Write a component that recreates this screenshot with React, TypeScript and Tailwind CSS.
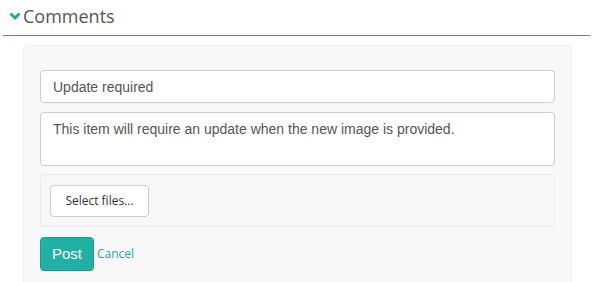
export default function App() {
  return (
    <div className="w-[600px] h-[282px] overflow-hidden bg-white">
      {/* Section header */}
      <div className="mx-[3px] w-[587px] h-[36px] border-b border-[#2a9d93] flex items-center pl-[6px] pb-[3px]">
        <svg width="12" height="9" viewBox="0 0 12 9" className="mr-[2px] mt-[1px]">
          <path d="M1.5 1.5 L6 6 L10.5 1.5" stroke="#23a99c" strokeWidth="3" fill="none" />
        </svg>
        <span className="text-[18px] text-[#555] leading-none font-['Open_Sans',sans-serif]">
          Comments
        </span>
      </div>

      {/* Comment form panel */}
      <div className="ml-[23px] mt-[9px] w-[549px] h-[260px] bg-[#f8f8f8] border border-[#efefef] rounded-[4px] px-[16px] pt-[24px]">
        <input
          defaultValue="Update required"
          className="w-full h-[33px] bg-white border border-[#ccc] rounded-[4px] px-[12px] text-[14px] text-[#555] font-['Liberation_Sans',Arial,sans-serif] outline-none"
        />
        <textarea
          defaultValue="This item will require an update when the new image is provided."
          className="block mt-[9px] w-full h-[54px] bg-white border border-[#ccc] rounded-[4px] px-[12px] pt-[6px] text-[14px] leading-[20px] text-[#555] font-['Liberation_Sans',Arial,sans-serif] outline-none resize-none"
        />
        <div className="mt-[8px] h-[53px] bg-[#f7f7f7] border border-[#ececec] rounded-[4px] flex items-center px-[9px]">
          <button className="w-[99px] h-[32px] bg-white border border-[#ccc] rounded-[4px] text-[12px] text-[#333] font-['Open_Sans',sans-serif]">
            Select files...
          </button>
        </div>
        <div className="mt-[10px] flex items-center">
          <button className="w-[54px] h-[34px] bg-[#20b0a4] border border-[#1a9a8f] rounded-[4px] text-[15px] text-white font-['Liberation_Sans',Arial,sans-serif]">
            Post
          </button>
          <span className="ml-[3px] text-[12px] text-[#23a99c] font-['Open_Sans',sans-serif]">Cancel</span>
        </div>
      </div>
    </div>
  )
}
